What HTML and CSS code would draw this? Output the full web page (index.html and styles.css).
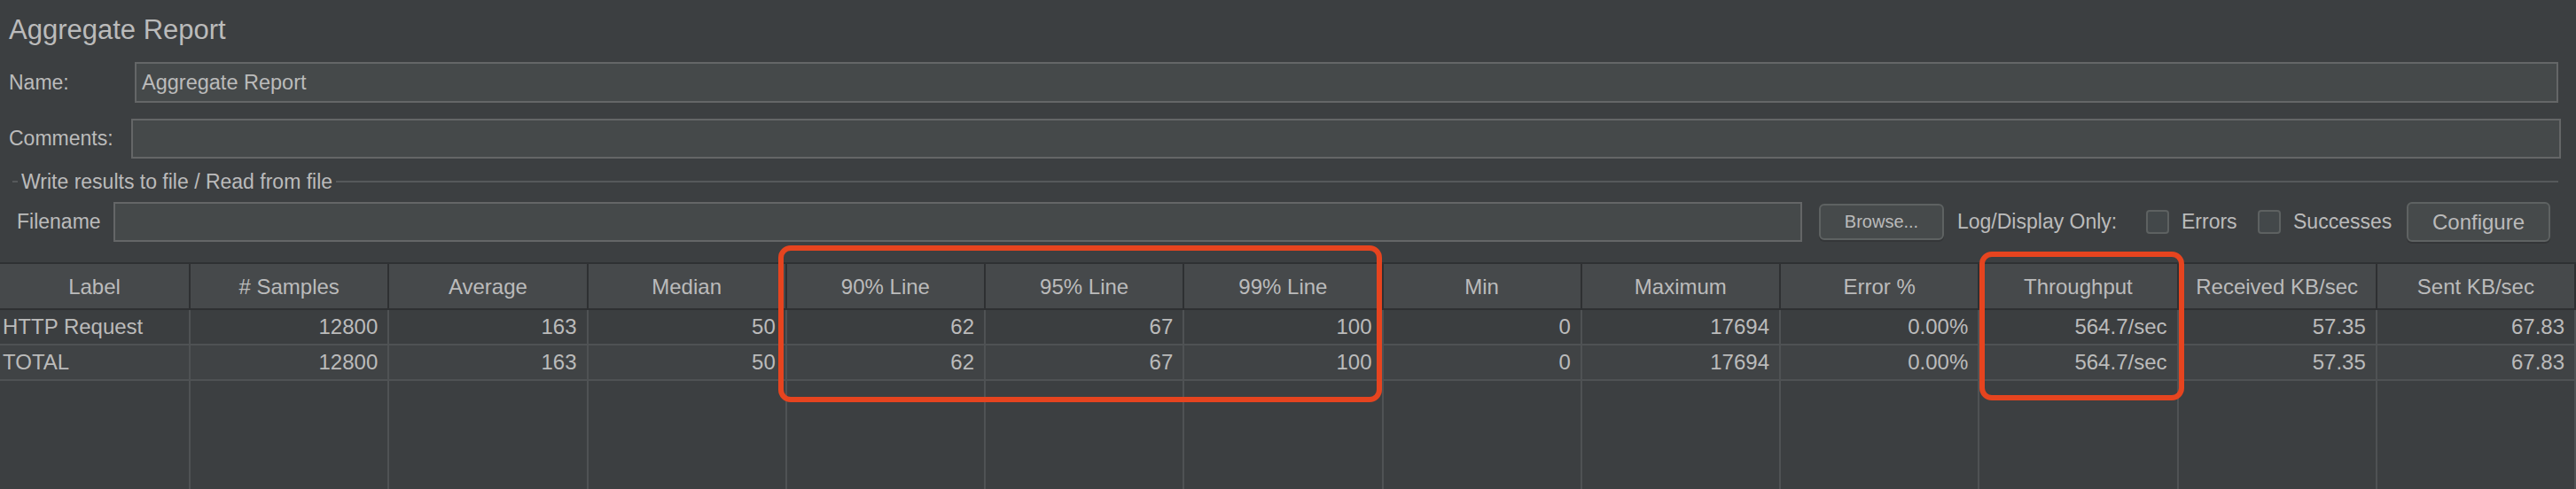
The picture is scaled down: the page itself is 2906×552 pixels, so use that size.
FILE: index.html
```html
<!DOCTYPE html>
<html>
<head>
<meta charset="utf-8">
<link rel="stylesheet" href="styles.css">
</head>
<body>
<div class="page">
  <div class="title">Aggregate Report</div>
  <div class="form-row name-row">
    <div class="label name-label">Name:</div>
    <div class="field">Aggregate Report</div>
  </div>
  <div class="form-row comments-row">
    <div class="label comments-label">Comments:</div>
    <div class="field"></div>
  </div>
  <div class="legend">
    <span class="legend-tick"></span>
    <span class="legend-text">Write results to file / Read from file</span>
    <span class="legend-line"></span>
  </div>
  <div class="file-row">
    <div class="label file-label">Filename</div>
    <div class="field file-field"></div>
    <div class="btn browse">Browse...</div>
    <div class="label log-label">Log/Display Only:</div>
    <div class="checkbox"></div>
    <div class="label errors-label">Errors</div>
    <div class="checkbox"></div>
    <div class="label succ-label">Successes</div>
    <div class="btn configure">Configure</div>
  </div>
  <div class="table">
    <div class="th">Label</div>
    <div class="th"># Samples</div>
    <div class="th">Average</div>
    <div class="th">Median</div>
    <div class="th">90% Line</div>
    <div class="th">95% Line</div>
    <div class="th">99% Line</div>
    <div class="th">Min</div>
    <div class="th">Maximum</div>
    <div class="th">Error %</div>
    <div class="th">Throughput</div>
    <div class="th">Received KB/sec</div>
    <div class="th">Sent KB/sec</div>

    <div class="td first r1">HTTP Request</div>
    <div class="td r1">12800</div>
    <div class="td r1">163</div>
    <div class="td r1">50</div>
    <div class="td r1">62</div>
    <div class="td r1">67</div>
    <div class="td r1">100</div>
    <div class="td r1">0</div>
    <div class="td r1">17694</div>
    <div class="td r1">0.00%</div>
    <div class="td r1">564.7/sec</div>
    <div class="td r1">57.35</div>
    <div class="td r1">67.83</div>

    <div class="td first r2">TOTAL</div>
    <div class="td r2">12800</div>
    <div class="td r2">163</div>
    <div class="td r2">50</div>
    <div class="td r2">62</div>
    <div class="td r2">67</div>
    <div class="td r2">100</div>
    <div class="td r2">0</div>
    <div class="td r2">17694</div>
    <div class="td r2">0.00%</div>
    <div class="td r2">564.7/sec</div>
    <div class="td r2">57.35</div>
    <div class="td r2">67.83</div>

    <div class="fill"></div><div class="fill"></div><div class="fill"></div><div class="fill"></div>
    <div class="fill"></div><div class="fill"></div><div class="fill"></div><div class="fill"></div>
    <div class="fill"></div><div class="fill"></div><div class="fill"></div><div class="fill"></div>
    <div class="fill"></div>
  </div>
  <div class="mark mark-lines"></div>
  <div class="mark mark-throughput"></div>
</div>
</body>
</html>
```
FILE: styles.css
```css
html, body {
  margin: 0;
  padding: 0;
  background: #3c3f41;
  overflow: hidden;
}
.page {
  position: relative;
  width: 2906px;
  height: 552px;
  font-family: "Liberation Sans", Arial, sans-serif;
  color: #bbbbbb;
  background: #3c3f41;
}
.title {
  font-size: 31px;
  line-height: 67px;
  height: 67px;
  padding-left: 10px;
  margin-bottom: 3px;
}
.form-row {
  display: flex;
  align-items: stretch;
  padding-left: 10px;
}
.label {
  font-size: 23px;
  white-space: nowrap;
  display: flex;
  align-items: center;
}
.field {
  box-sizing: border-box;
  border: 2px solid #646667;
  background: #45494a;
  flex: 1;
  font-size: 23.5px;
  display: flex;
  align-items: center;
  padding-left: 6px;
  padding-top: 1px;
}
.name-row {
  height: 46px;
  padding-right: 20px;
}
.name-label { width: 142px; }
.comments-row {
  height: 45px;
  margin-top: 18px;
  padding-right: 17px;
}
.comments-label { width: 138px; }
.legend {
  display: flex;
  align-items: center;
  height: 26px;
  margin-top: 13px;
  padding-left: 14px;
  padding-right: 20px;
  font-size: 23px;
}
.legend-tick {
  width: 6px;
  height: 2px;
  background: #56595b;
}
.legend-text {
  padding: 0 4px;
  white-space: nowrap;
}
.legend-line {
  flex: 1;
  height: 2px;
  background: #56595b;
}
.file-row {
  display: flex;
  align-items: center;
  height: 45px;
  margin-top: 10px;
  padding-left: 19px;
  padding-right: 29px;
}
.file-label {
  width: 109px;
  height: 45px;
}
.file-field {
  height: 45px;
}
.btn {
  box-sizing: border-box;
  border: 2px solid #5e6262;
  border-radius: 6px;
  background: #464a4b;
  box-shadow: 0 2px 0 #343638;
  display: flex;
  align-items: center;
  justify-content: center;
  white-space: nowrap;
}
.browse {
  width: 141px;
  height: 41px;
  margin-left: 19px;
  font-size: 20px;
}
.log-label {
  width: 190px;
  margin-left: 15px;
}
.checkbox {
  box-sizing: border-box;
  width: 26px;
  height: 27px;
  border: 2px solid #5d6161;
  border-radius: 4px;
  background: #43484a;
  margin-left: 23px;
}
.errors-label {
  width: 62px;
  margin-left: 14px;
}
.errors-label + .checkbox { margin-left: 24px; }
.succ-label {
  width: 112px;
  margin-left: 14px;
}
.configure {
  width: 162px;
  height: 45px;
  margin-left: 16px;
  font-size: 24px;
}
.table {
  margin-top: 23px;
  display: grid;
  grid-template-columns: 215px repeat(12, 1fr);
  grid-template-rows: 52px 40px 40px 122px;
  border-top: 2px solid #2f3133;
  font-size: 24px;
}
.th {
  box-sizing: border-box;
  background: #46494b;
  border-right: 2px solid #2e3032;
  border-bottom: 2px solid #2e3032;
  display: flex;
  align-items: center;
  justify-content: center;
  padding-top: 2px;
  white-space: nowrap;
}
.td {
  box-sizing: border-box;
  border-right: 2px solid #4f5254;
  border-bottom: 2px solid #4f5254;
  display: flex;
  align-items: center;
  justify-content: flex-end;
  padding-right: 11px;
  white-space: nowrap;
}
.td.first {
  justify-content: flex-start;
  padding-left: 3px;
}
.r1 { background: #3b3e40; }
.r2 { background: #404345; }
.fill {
  box-sizing: border-box;
  border-right: 2px solid #4f5254;
  background: #3c3f41;
}
.mark {
  position: absolute;
  box-sizing: border-box;
  border: 6px solid #e6441f;
  border-radius: 14px;
}
.mark-lines {
  left: 878px;
  top: 277px;
  width: 681px;
  height: 177px;
}
.mark-throughput {
  left: 2233px;
  top: 284px;
  width: 231px;
  height: 168px;
}
```
